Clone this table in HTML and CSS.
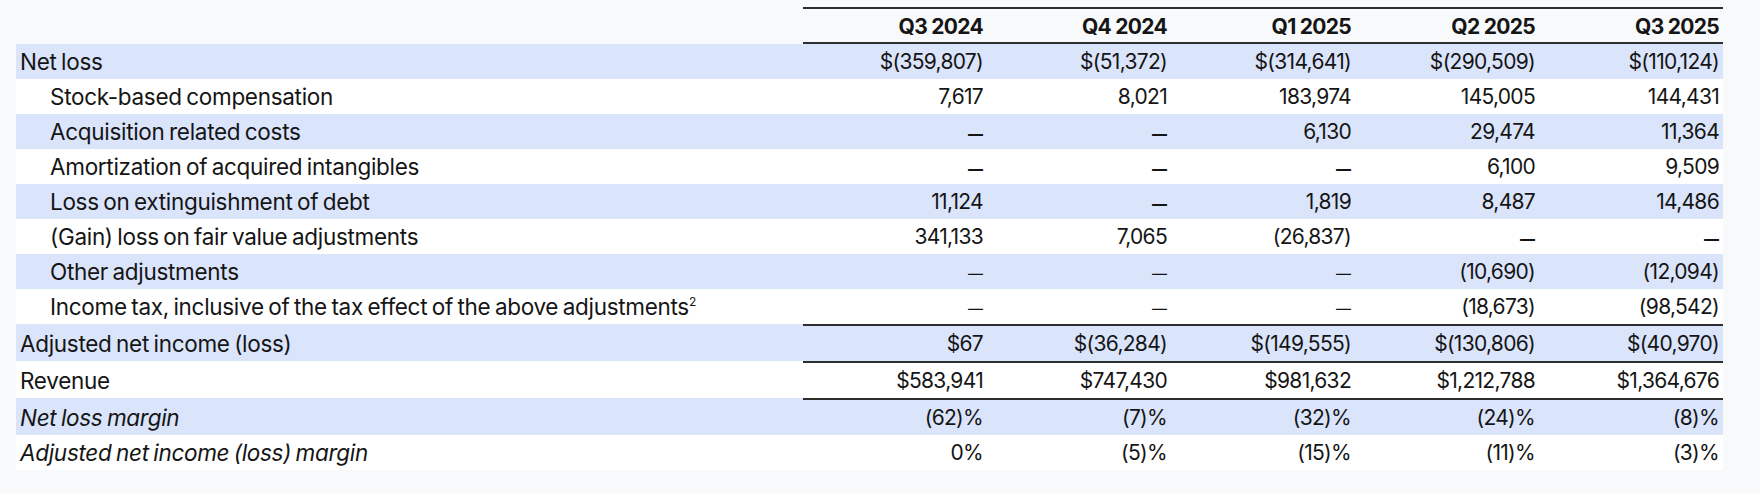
FILE: index.html
```html
<!DOCTYPE html>
<html lang="en">
<head>
<meta charset="utf-8">
<title>Adjusted net income reconciliation</title>
<link rel="stylesheet" href="styles.css">
</head>
<body>
<table class="recon">
  <colgroup>
    <col class="col-label">
    <col class="col-num"><col class="col-num"><col class="col-num"><col class="col-num"><col class="col-num">
  </colgroup>
  <thead>
    <tr class="head">
      <th class="label"></th>
      <th>Q3 2024</th><th>Q4 2024</th><th>Q1 2025</th><th>Q2 2025</th><th>Q3 2025</th>
    </tr>
  </thead>
  <tbody>
    <tr class="shade">
      <td class="label">Net loss</td>
      <td>$(359,807)</td><td>$(51,372)</td><td>$(314,641)</td><td>$(290,509)</td><td>$(110,124)</td>
    </tr>
    <tr>
      <td class="label indent">Stock-based compensation</td>
      <td>7,617</td><td>8,021</td><td>183,974</td><td>145,005</td><td>144,431</td>
    </tr>
    <tr class="shade">
      <td class="label indent">Acquisition related costs</td>
      <td><span class="dash">—</span></td><td><span class="dash">—</span></td><td>6,130</td><td>29,474</td><td>11,364</td>
    </tr>
    <tr>
      <td class="label indent">Amortization of acquired intangibles</td>
      <td><span class="dash">—</span></td><td><span class="dash">—</span></td><td><span class="dash">—</span></td><td>6,100</td><td>9,509</td>
    </tr>
    <tr class="shade">
      <td class="label indent">Loss on extinguishment of debt</td>
      <td>11,124</td><td><span class="dash">—</span></td><td>1,819</td><td>8,487</td><td>14,486</td>
    </tr>
    <tr>
      <td class="label indent">(Gain) loss on fair value adjustments</td>
      <td>341,133</td><td>7,065</td><td>(26,837)</td><td><span class="dash">—</span></td><td><span class="dash">—</span></td>
    </tr>
    <tr class="shade">
      <td class="label indent">Other adjustments</td>
      <td><span class="dash thin">—</span></td><td><span class="dash thin">—</span></td><td><span class="dash thin">—</span></td><td>(10,690)</td><td>(12,094)</td>
    </tr>
    <tr>
      <td class="label indent">Income tax, inclusive of the tax effect of the above adjustments<sup>2</sup></td>
      <td><span class="dash thin">—</span></td><td><span class="dash thin">—</span></td><td><span class="dash thin">—</span></td><td>(18,673)</td><td>(98,542)</td>
    </tr>
    <tr class="shade ruled">
      <td class="label">Adjusted net income (loss)</td>
      <td>$67</td><td>$(36,284)</td><td>$(149,555)</td><td>$(130,806)</td><td>$(40,970)</td>
    </tr>
    <tr class="ruled">
      <td class="label">Revenue</td>
      <td>$583,941</td><td>$747,430</td><td>$981,632</td><td>$1,212,788</td><td>$1,364,676</td>
    </tr>
    <tr class="shade ruled">
      <td class="label italic">Net loss margin</td>
      <td>(62)%</td><td>(7)%</td><td>(32)%</td><td>(24)%</td><td>(8)%</td>
    </tr>
    <tr>
      <td class="label italic">Adjusted net income (loss) margin</td>
      <td>0%</td><td>(5)%</td><td>(15)%</td><td>(11)%</td><td>(3)%</td>
    </tr>
  </tbody>
</table>
</body>
</html>
```

FILE: styles.css
```css
html, body {
  margin: 0;
  padding: 0;
  background: #f8f9fb;
}

body {
  padding: 7px 0 0 16px;
  font-family: Inter, "Liberation Sans", sans-serif;
  color: #151515;
}

.recon {
  border-collapse: separate;
  border-spacing: 0;
  width: 1707px;
  table-layout: fixed;
  font-size: 21px;
  letter-spacing: -0.7px;
}

.col-label { width: 787px; }
.col-num { width: 184px; }

.recon th,
.recon td {
  padding: 0 4px;
  text-align: right;
  vertical-align: middle;
  white-space: nowrap;
}

.recon td {
  height: 35px;
  background: #ffffff;
}

.recon tr.shade td {
  background: #dae4fb;
}

.head th {
  height: 31px;
  font-weight: 700;
  font-size: 21px;
  border-top: 2px solid #2e2e2e;
  border-bottom: 2px solid #2e2e2e;
  padding-top: 2px;
}

.head th.label {
  border-color: transparent;
}

.recon .label {
  text-align: left;
  font-size: 22.5px;
  letter-spacing: -0.3px;
  word-spacing: -1.5px;
}

.recon .indent {
  padding-left: 34px;
}

.recon .italic {
  font-style: italic;
}

.ruled td {
  border-top: 2px solid #2e2e2e;
}

.ruled td.label {
  border-top-color: transparent;
}

.dash {
  font-size: 15px;
  font-weight: 800;
  letter-spacing: 0;
}

.dash.thin {
  font-weight: 400;
}

sup {
  font-size: 12px;
  line-height: 0;
  vertical-align: 9px;
}
```
